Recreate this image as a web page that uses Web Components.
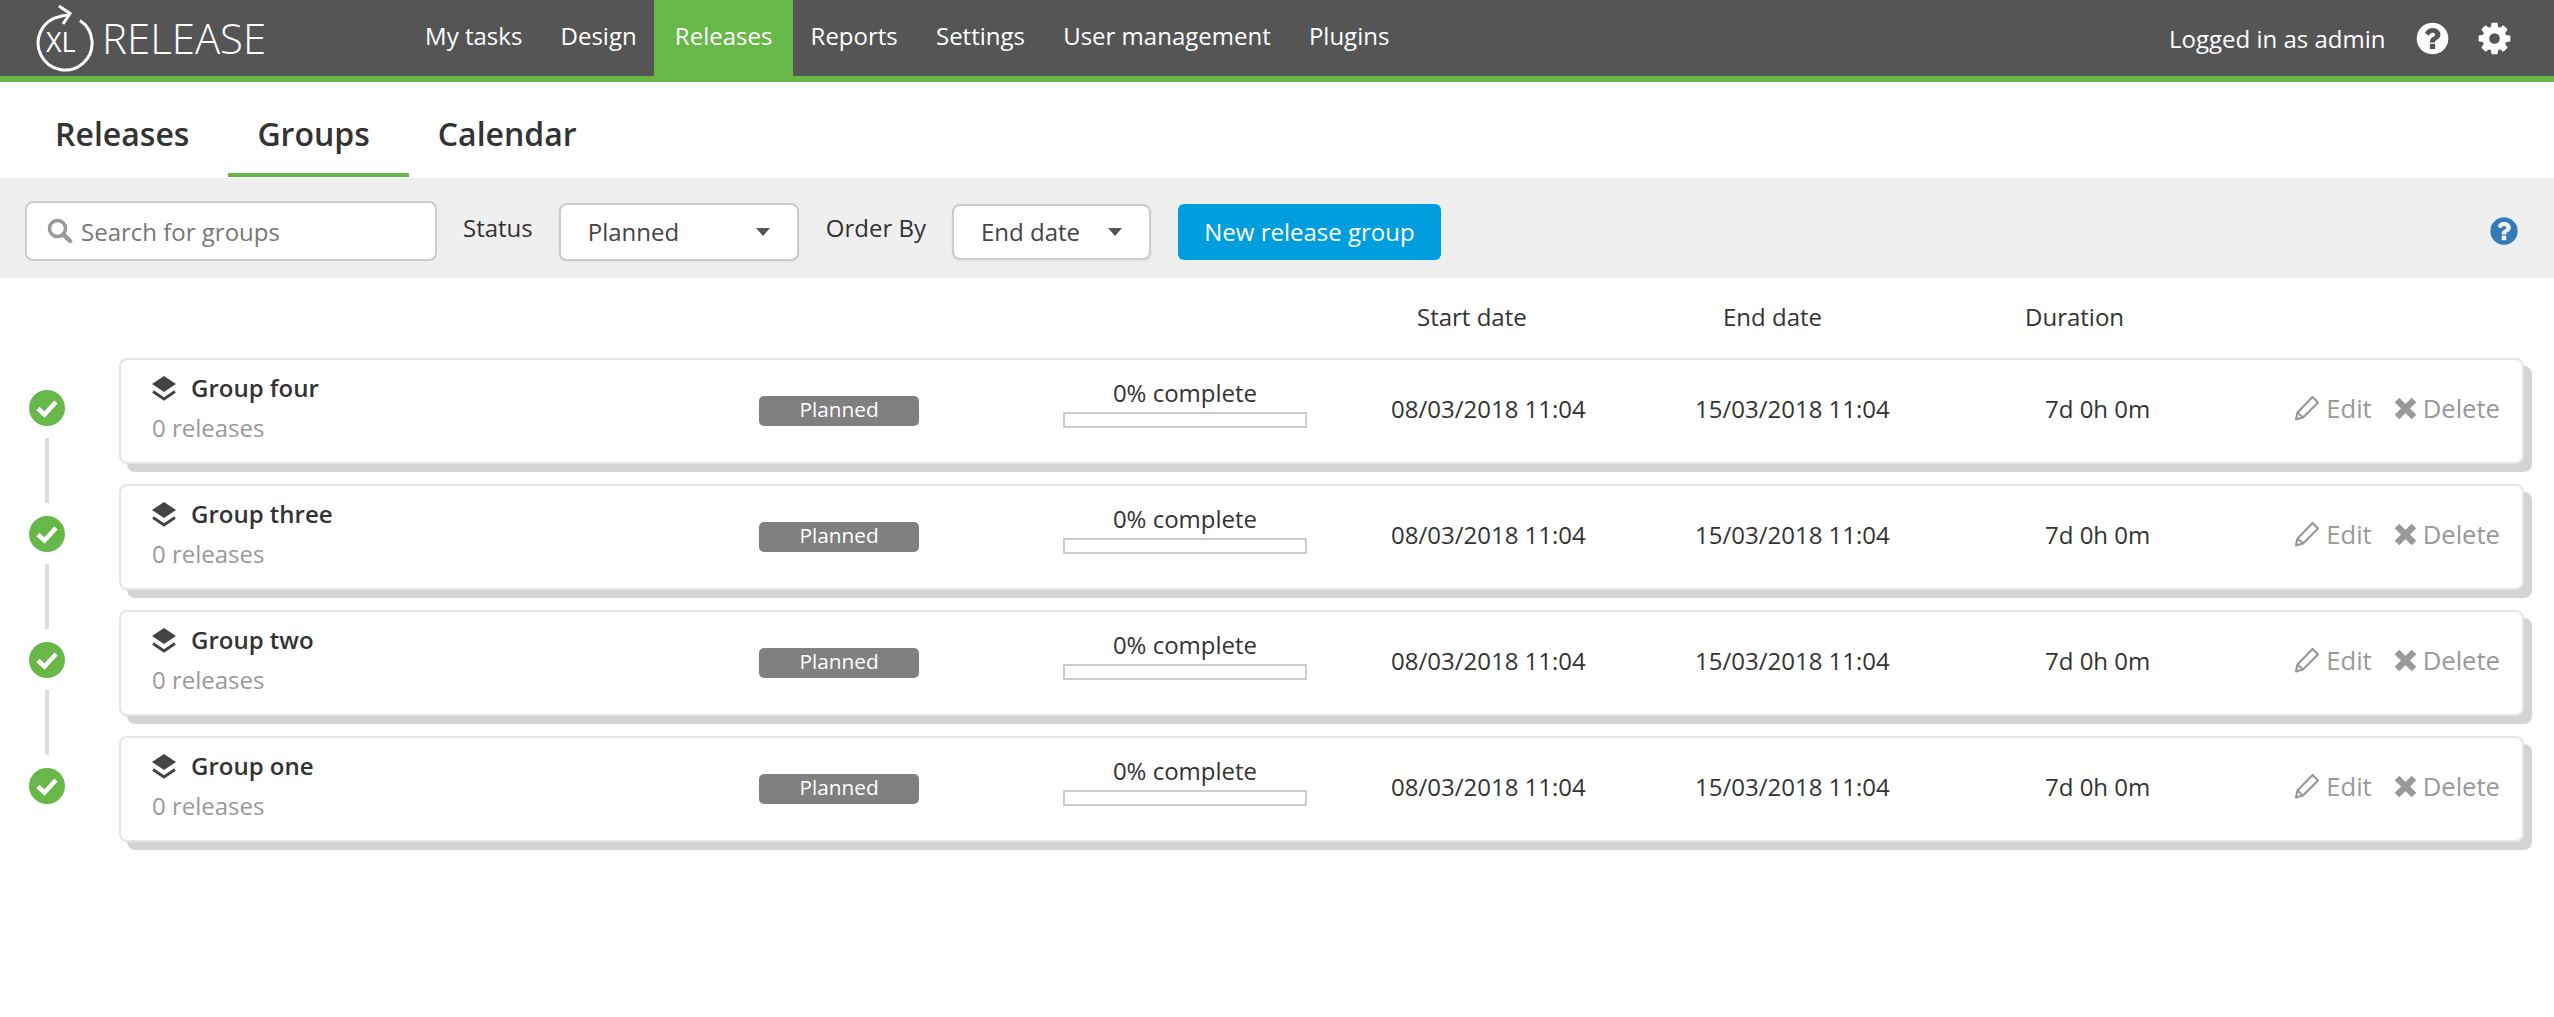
<!DOCTYPE html>
<html lang="en">
<head>
<meta charset="utf-8">
<title>XL Release - Groups</title>
<style>
html,body{margin:0;padding:0;background:#fff;}
body{font-family:"Open Sans","Liberation Sans",sans-serif;font-size:24px;color:#333;}
xl-rows{display:block}
</style>
</head>
<body>
<xl-header></xl-header>
<xl-tabs></xl-tabs>
<xl-toolbar></xl-toolbar>
<xl-columns></xl-columns>
<xl-rows>
  <xl-group-row name="Group four" line></xl-group-row>
  <xl-group-row name="Group three" line></xl-group-row>
  <xl-group-row name="Group two" line></xl-group-row>
  <xl-group-row name="Group one"></xl-group-row>
</xl-rows>
<script>
const COG='M1152 896q0-106-75-181t-181-75-181 75-75 181 75 181 181 75 181-75 75-181zm512-109v222q0 12-8 23t-20 13l-185 28q-19 54-39 91 35 50 107 138 10 12 10 25t-9 23q-27 37-99 108t-94 71q-12 0-26-9l-138-108q-44 23-91 38-16 136-29 186-7 28-36 28h-222q-14 0-24.500-8.500t-11.500-21.500l-28-184q-49-16-90-37l-141 107q-10 9-25 9-14 0-25-11-126-114-165-168-7-10-7-23 0-12 8-23 15-21 51-66.500t54-70.500q-27-50-41-99l-183-27q-13-2-21-12.500t-8-23.500v-222q0-12 8-23t19-13l186-28q14-46 39-92-40-57-107-138-10-12-10-24 0-10 9-23 26-36 98.500-107.500t94.500-71.500q13 0 26 10l138 107q44-23 91-38 16-136 29-186 7-28 36-28h222q14 0 24.500 8.500t11.500 21.500l28 184q49 16 90 37l142-107q9-9 24-9 13 0 25 10 129 119 165 170 7 8 7 22 0 12-8 23-15 21-51 66.500t-54 70.500q26 50 41 98l183 28q13 2 21 12.500t8 23.500z';
const QUESTION='M1024 1376v-192q0-14-9-23t-23-9h-192q-14 0-23 9t-9 23v192q0 14 9 23t23 9h192q14 0 23-9t9-23zm256-672q0-88-55.500-163t-138.500-116-170-41q-243 0-371 213-15 24 8 42l132 100q7 6 19 6 16 0 25-12 53-68 86-92 34-24 86-24 48 0 85.500 26t37.500 59q0 38-20 61t-68 45q-63 28-115.500 86.500t-52.500 125.500v36q0 14 9 23t23 9h192q14 0 23-9t9-23q0-19 21.500-49.500t54.500-49.500q32-18 49-28.500t46-35 44.500-48 28-60.500 12.500-81zm384 192q0 209-103 385.500t-279.500 279.500-385.500 103-385.500-103-279.500-279.500-103-385.500 103-385.500 279.500-279.500 385.500-103 385.500 103 279.500 279.500 103 385.500z';

function define(tag, html){
  customElements.define(tag, class extends HTMLElement{
    connectedCallback(){
      if(this.shadowRoot) return;
      const r=this.attachShadow({mode:'open'});
      r.innerHTML=typeof html==='function'?html(this):html;
    }
  });
}

define('xl-logo',`<style>
:host{display:flex;align-items:center;width:406px;height:76px;box-sizing:border-box;padding-left:34px;flex:none}
svg{display:block;flex:none}
svg text{font-family:"Open Sans",sans-serif;font-size:27px;font-weight:400;fill:#fff}
.w{margin-left:8px;font-size:42px;font-weight:300;color:#fff;line-height:1;padding-bottom:1px}
</style>
<svg width="60" height="76" viewBox="0 0 60 76">
<path d="M46 20.500A27 27 0 1 1 26 16.500C30 15.500 32 15 35 15" fill="none" stroke="#fff" stroke-width="3"/>
<path d="M25 6L36 13.500L29 24" fill="none" stroke="#fff" stroke-width="3"/>
<text x="12" y="52">XL</text>
</svg><span class="w">RELEASE</span>`);

define('xl-nav-item',`<style>
:host{display:flex;align-items:center;height:76px;padding:0 19.100px 5px;box-sizing:border-box;color:#fff;font-size:24px;white-space:nowrap}
:host([active]){background:#68b749;padding:0 20.500px 5px;margin:0 -1.400px}
</style><slot></slot>`);

define('xl-header',`<style>
:host{display:flex;align-items:stretch;height:76px;background:#555;border-bottom:6px solid #68b749;color:#fff}
nav{display:flex}
.right{margin-left:auto;display:flex;align-items:center;padding-right:41.500px}
.u{font-size:24px;margin-right:28px}
svg{display:block;fill:#fff}
.h{margin-right:25px}
</style>
<xl-logo></xl-logo>
<nav>
<xl-nav-item>My tasks</xl-nav-item><xl-nav-item>Design</xl-nav-item><xl-nav-item active>Releases</xl-nav-item><xl-nav-item>Reports</xl-nav-item><xl-nav-item>Settings</xl-nav-item><xl-nav-item>User management</xl-nav-item><xl-nav-item>Plugins</xl-nav-item>
</nav>
<div class="right"><span class="u">Logged in as admin</span>
<svg class="h" width="37" height="37" viewBox="0 0 1792 1792"><path d="${QUESTION}"/></svg>
<svg width="37" height="37" viewBox="0 0 1792 1792"><path d="${COG}"/></svg></div>`);

define('xl-tab',`<style>
:host{display:flex;align-items:center;height:95px;box-sizing:border-box;padding:11px 39px 0 29px;font-size:32px;font-weight:600;color:#333;white-space:nowrap;border-bottom:4px solid transparent}
:host([active]){border-bottom-color:#68b749}
</style><slot></slot>`);

define('xl-tabs',`<style>:host{display:flex;height:96px;padding-left:26px;box-sizing:border-box;background:#fff}</style>
<xl-tab>Releases</xl-tab><xl-tab active>Groups</xl-tab><xl-tab>Calendar</xl-tab>`);

define('xl-select',h=>`<style>
:host{display:flex;align-items:center;justify-content:space-between;box-sizing:border-box;background:#fff;border:2px solid #ccc;border-radius:8px;color:#444;font-size:24px;padding:0 27px 2px;margin-top:2px;height:${h.getAttribute('h')||58}px;width:${h.getAttribute('w')}px;box-shadow:0 1px 2px rgba(0,0,0,.08)}
i{display:block;width:0;height:0;border-left:7.500px solid transparent;border-right:7.500px solid transparent;border-top:8px solid #555;margin-top:2px}
</style><span><slot></slot></span><i></i>`);

define('xl-toolbar',`<style>
:host{display:flex;align-items:center;height:100px;box-sizing:border-box;background:#efefef;padding:6px 34px 0 25px;font-size:24px;color:#333}
.s{display:flex;align-items:center;box-sizing:border-box;width:412px;height:60px;background:#fff;border:2px solid #ccc;border-radius:8px;padding-left:20px;color:#777}
.s svg{display:block;margin-right:8px}
.l{margin:0 26px;position:relative;top:-4px}
.b{display:flex;align-items:center;justify-content:center;box-sizing:border-box;width:263px;height:56px;margin:2px 0 0 27px;padding-bottom:2px;border-radius:6px;background:#009ede;color:#fff}
.q{margin-left:auto;display:block;fill:#337ab7}
.l2{margin:0 26px 0 27px}
</style>
<div class="s"><svg width="26" height="26" viewBox="0 0 26 26"><circle cx="10.500" cy="10.500" r="8" fill="none" stroke="#999" stroke-width="3.500"/><path d="M16.500 16.500L23 23" stroke="#999" stroke-width="4.500" stroke-linecap="round"/></svg><span>Search for groups</span></div>
<span class="l">Status</span><xl-select w="240">Planned</xl-select>
<span class="l l2">Order By</span><xl-select w="199" h="56">End date</xl-select>
<div class="b">New release group</div>
<svg class="q" width="32" height="32" viewBox="0 0 1792 1792"><path d="${QUESTION}"/></svg>`);

define('xl-columns',`<style>
:host{display:flex;height:80px;box-sizing:border-box;padding:24px 0 0 1417px;font-size:24px;color:#333;line-height:30px}
span{display:block}
.a{width:306px}.b{width:302px}
</style><span class="a">Start date</span><span class="b">End date</span><span>Duration</span>`);

define('xl-layers',`<style>:host{display:block;width:24px;height:26px;flex:none}svg{display:block}</style>
<svg width="24" height="26" viewBox="0 0 24 26"><path d="M12 0L24 8L12 16L0 8Z" fill="#444"/><path d="M1 15.500L12 23L23 15.500" fill="none" stroke="#444" stroke-width="2.800"/></svg>`);

define('xl-badge',`<style>
:host{display:flex;align-items:center;justify-content:center;box-sizing:border-box;width:160px;height:30px;background:#808080;border-radius:5px;color:#fff;font-size:20.800px;padding-bottom:5px}
</style><slot></slot>`);

define('xl-progress',`<style>
:host{display:block;width:244px;text-align:center;font-size:24px;color:#333}
.t{line-height:30px;height:34px}
.b{height:16px;box-sizing:border-box;border:2px solid #ccc;background:#fff}
</style><div class="t"><slot></slot></div><div class="b"></div>`);

define('xl-group-row',h=>`<style>
:host{display:flex;height:126px;box-sizing:border-box;padding-right:21px;color:#333;font-size:24px}
.tl{width:119px;flex:none;position:relative}
.chk{display:block;position:absolute;left:29px;top:32px}
.ln{position:absolute;left:45px;top:80px;width:4px;height:65px;background:#dcdcdc}
.card{flex:1;height:106px;box-sizing:border-box;border:2px solid #e5e5e5;border-radius:8px;background:#fff;box-shadow:8px 8px 0 0 #d4d4d4;display:flex;align-items:center;padding-right:22px;white-space:nowrap;margin-right:9px}
.nm{width:638px;padding-left:31px;box-sizing:border-box;flex:none;align-self:flex-start;padding-top:13px}
.ti{display:flex;align-items:flex-start;gap:15px;font-weight:600;line-height:30px;color:#333}
.ti xl-layers{margin-top:3px}
.rel{color:#999;line-height:30px;margin-top:10px}
.st{width:304px;flex:none}
.pr{width:328px;flex:none;margin-top:-16px}
.d1{width:304px;flex:none;margin-top:-6px}
.d2{width:350px;flex:none;margin-top:-6px}
.du{flex:1;margin-top:-6px}
.ac{display:flex;align-items:center;color:#999;margin-top:-6px;font-size:25.600px}
.ac svg{display:block}
.e{margin:0 6px 0 0}
.x{margin:0 5px 0 21px}
</style>
<div class="tl"><svg class="chk" width="36" height="36" viewBox="0 0 36 36"><circle cx="18" cy="18" r="18" fill="#68b749"/><path d="M9 18.500L15.500 24.500L27 12" fill="none" stroke="#fff" stroke-width="4.500"/></svg>${h.hasAttribute('line')?'<div class="ln"></div>':''}</div>
<div class="card">
<div class="nm"><div class="ti"><xl-layers></xl-layers><span>${h.getAttribute('name')}</span></div><div class="rel">0 releases</div></div>
<div class="st"><xl-badge>Planned</xl-badge></div>
<div class="pr"><xl-progress>0% complete</xl-progress></div>
<div class="d1">08/03/2018 11:04</div>
<div class="d2">15/03/2018 11:04</div>
<div class="du">7d 0h 0m</div>
<div class="ac">
<svg class="e" width="26" height="26" viewBox="0 0 26 26"><path d="M2 24.500L3.500 17.500L18.500 2L24 7.500L9 22.500Z" fill="none" stroke="#999" stroke-width="2.200" stroke-linejoin="round"/><path d="M3.500 17.500L9 22.500" stroke="#999" stroke-width="2"/></svg><span>Edit</span>
<svg class="x" width="25" height="25" viewBox="0 0 25 25"><path d="M4 4L21 21M21 4L4 21" stroke="#999" stroke-width="6.500"/></svg><span>Delete</span>
</div>
</div>`);
</script>
</body>
</html>
